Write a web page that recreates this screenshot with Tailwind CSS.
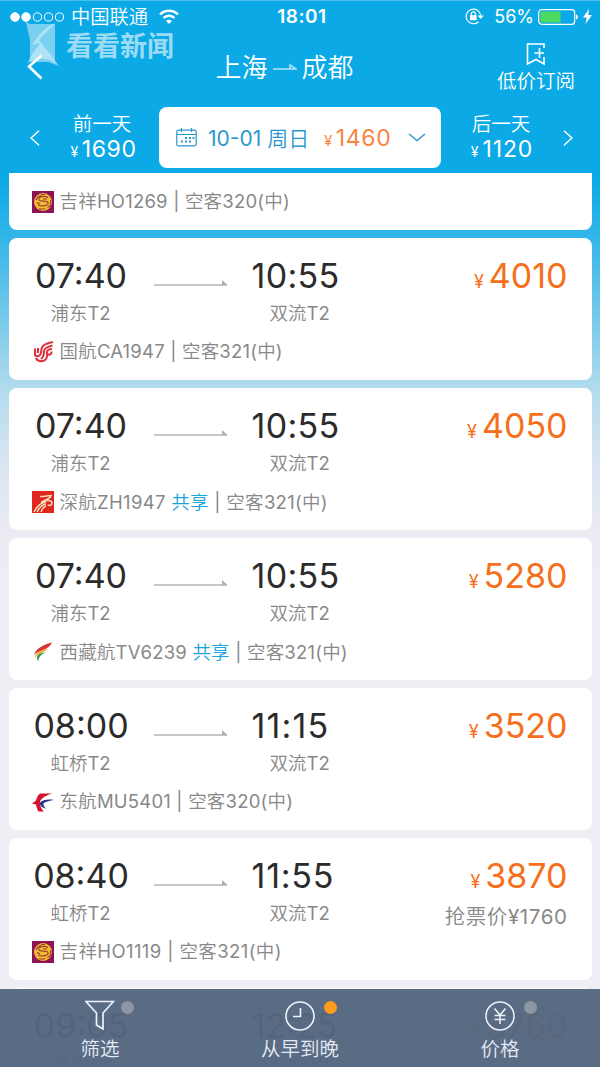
<!DOCTYPE html>
<html lang="zh-CN">
<head>
  <meta charset="UTF-8">
  <meta name="viewport" content="width=device-width, initial-scale=1.0">
  <title>上海 - 成都 机票</title>
  <script src="https://cdn.jsdelivr.net/npm/@tailwindcss/browser@4"></script>
  <style>
    body {
      font-family: Inter, 'Noto Sans CJK SC DemiLight', 'Noto Sans CJK SC', sans-serif;
      font-weight: 400;
    }
  </style>
</head>
<body class="w-[600px] h-[1067px] overflow-hidden relative bg-[linear-gradient(to_bottom,#0ba9e6_0px,#0ba9e6_180px,#35b6e9_240px,#6cc6e9_305px,#aedaed_384px,#d6e4f1_455px,#ecebf4_535px,#efeef5_600px)]">

  <!-- icons -->
  <svg class="hidden">
    <symbol id="arrow" viewBox="0 0 74 6"><path d="M0 5H73" fill="none" stroke="#b5b5b5" stroke-width="1.500"/><path d="M68 0V5H73.500z" fill="#b0b0b0"/></symbol>
    <symbol id="juneyao" viewBox="0 0 22 22">
      <rect width="22" height="22" fill="#8e1458"/>
      <circle cx="11" cy="11" r="9" fill="#f0bb2c"/>
      <path d="M16 6.500C11 4 6 6 7 9c1 2 8 0 9 2.500 1 3-5 4.500-10 2.500M4 9c1-3 3-4 5-4.500M18.500 9c1 3 0 6-3 7.500M7 17.500c2 1 4 1 6 0M11 8h4M5 11.500l3 1.500M9 3.500h4" fill="none" stroke="#a03c3c" stroke-width="1.200"/>
    </symbol>
    <symbol id="airchina" viewBox="0 0 20 22">
      <path d="M1.500 7.500V13c0 3 4.500 3 5.500 0 1-2 .5-4 1.500-6.500C10 3 14 2 19.500 1M4.500 7v5M7.500 18c2-1.500 3-4 3-7.500C10.500 7 14 5.500 19 4.500" fill="none" stroke="#dc3540" stroke-width="2.100"/>
      <path d="M2.500 17c2 4.500 10.500 4.500 11-2V11.500c0-2.500 2-3.500 5-3.500M14 13.500c3 .5 4-.5 4-3" fill="none" stroke="#dc3540" stroke-width="2.100"/>
    </symbol>
    <symbol id="shenzhen" viewBox="0 0 22 22">
      <rect width="22" height="22" fill="#df261f"/>
      <path d="M8 5.500c4 .5 7-1 11-1-1 4-6 4-10 7 4-2 10-3.500 11 0 0 3-3 4-4 2M2 21c3-6 6-9 12-10M5 21c2-4 4-7 9-8M9 21c1-3 2-5 5-6" fill="none" stroke="#f8dcb8" stroke-width="1.500"/>
    </symbol>
    <symbol id="tibet" viewBox="0 0 20 20">
      <path d="M19 .5C11 2.500 3 6 1 13 6 8 16 8 19 .5z" fill="#d8323b"/>
      <path d="M15 6.500C8 8 3 10 1.500 16 5 11.500 11 11 15 6.500z" fill="#f0b12c"/>
      <path d="M12.500 10.500C6 11 1.500 14 5.500 19.500 5 15.500 8 12.500 12.500 10.500z" fill="#2f9a55"/>
    </symbol>
    <symbol id="eastern" viewBox="0 0 22 19">
      <path d="M8 .5h12.500C15 2 10 4.500 8 8.500 7.500 12 9.500 16 12 18.500H6.500C5.500 17 4.500 14 4 11.500L0 10.500 4 7.500C5 4 6 2 8 .5z" fill="#d51130"/>
      <path d="M22 7C16 6 10.500 7 8 9.500c-.5 3 2.500 5.500 6 6-2-2-3.500-4-2-5.500C14 8.500 18 7.800 22 7z" fill="#253288"/>
    </symbol>
  </svg>

  <header class="h-[173px] text-white">
    <!-- status bar -->
    <div class="h-8 grid grid-cols-3 items-center border-t border-white/25">
      <div class="flex items-center pl-[10px]">
        <svg class="w-[54px] h-[10px]" viewBox="0 0 54 10" fill="none" stroke="#fff">
          <circle cx="5" cy="5" r="4.300" fill="#fff"/><circle cx="16" cy="5" r="4.300" fill="#fff"/><circle cx="27.500" cy="5" r="4.100"/><circle cx="38.500" cy="5" r="4.100"/><circle cx="49.500" cy="5" r="4.100"/>
        </svg>
        <span class="ml-[7px] text-[19.300px] leading-[30px]">中国联通</span>
        <svg class="ml-[11px] w-5 h-4" viewBox="0 0 20 16" fill="none" stroke="#fff" stroke-width="2.400">
          <path d="M1 5.500C6 .5 14 .5 19 5.500M4.500 9c3-3 8-3 11 0"/><path d="M10 15l-3-3.200c1.800-1.500 4.200-1.500 6 0z" fill="#fff" stroke="none"/>
        </svg>
      </div>
      <div class="text-center pl-1 text-[19px] leading-[30px] font-semibold tracking-[0.500px]">18:01</div>
      <div class="flex items-center justify-end pr-[8px]">
        <svg class="w-[19px] h-[17px]" viewBox="0 0 19 17" fill="none" stroke="#fff" stroke-width="1.200">
          <path d="M13.500 13.700A7.300 7.300 0 1 1 15.700 7.500"/><path d="M12.500 7.500h6.300l-3 3.500z" fill="#fff" stroke="none"/>
          <rect x="5" y="7.200" width="6.600" height="5" fill="#fff" stroke="none"/><path d="M6.300 7.500V5.800a2 2 0 0 1 4 0v1.700"/>
        </svg>
        <span class="ml-[10px] text-[18px] leading-[30px]">56%</span>
        <svg class="ml-[4px] w-[40px] h-4" viewBox="0 0 40 16">
          <rect x=".7" y=".7" width="36" height="14.600" rx="3" fill="none" stroke="#fff" stroke-width="1.200"/>
          <rect x="2.500" y="2.500" width="20" height="11" fill="#4cd964"/>
          <path d="M38 5.500c2.500.5 2.500 4.500 0 5z" fill="#fff"/>
        </svg>
        <svg class="ml-[5px] w-[9px] h-[15px]" viewBox="0 0 9 15" fill="#fff"><path d="M6 0L0 8.500h3.700L2.500 15 9 6H5.200z"/></svg>
      </div>
    </div>

    <!-- title -->
    <div class="h-[75px] grid grid-cols-[200px_1fr_200px]">
      <svg class="ml-[27px] mt-[22px] w-4 h-[26px]" viewBox="0 0 16 26" fill="none" stroke="#fff" stroke-width="2.600"><path d="M14.500 1.500L2 12.500l12.500 12"/></svg>
      <div class="mt-[17px] h-9 flex items-center justify-center pr-[31px] whitespace-nowrap text-[26px]">
        <span>上海</span>
        <svg class="mx-[5px] w-6 h-2" viewBox="0 0 24 8"><path d="M0 6H23L17 2V6" fill="none" stroke="#fff" stroke-opacity=".7" stroke-width="1.500"/></svg>
        <span>成都</span>
      </div>
      <div class="flex flex-col items-center pt-[11px] pl-[72px]">
        <svg class="w-5 h-[23px]" viewBox="0 0 20 23" fill="none" stroke="#fff" stroke-width="1.600"><path d="M18 5V1H1.500V21L10 16.500 18 21V14M13.500 5v10M8.500 10h9.500"/></svg>
        <span class="mt-px text-[19.500px] leading-7">低价订阅</span>
      </div>
    </div>

    <!-- day switcher -->
    <div class="flex h-[61px]">
      <div class="w-[159px] flex items-center">
        <svg class="ml-[30px] w-[10px] h-4" viewBox="0 0 10 16" fill="none" stroke="#fff" stroke-width="1.500"><path d="M9 .7L1 8l8 7.300"/></svg>
        <div class="ml-[28px] w-[68px] flex flex-col items-center whitespace-nowrap">
          <span class="text-[19.500px] leading-[26px]">前一天</span>
          <span class="pl-[3px] text-[23px] leading-[25px] tracking-[0.600px]"><span class="text-[14px] mr-[3px]">¥</span>1690</span>
        </div>
      </div>
      <div class="w-[282px] h-[61px] bg-white rounded-lg flex items-center whitespace-nowrap text-[#2a98cf]">
        <svg class="ml-[17px] w-[21px] h-[19px]" viewBox="0 0 21 19" fill="none" stroke="#2a98cf" stroke-width="1.200">
          <rect x=".8" y="2.200" width="19.400" height="15.600" rx="1.500"/><path d="M1 6.500h19M5.500 0v4M15.500 0v4"/><path d="M9 10h2M13 10h2M16.500 10h2M5 13.500h2M9 13.500h2M13 13.500h2" stroke-width="1.800"/>
        </svg>
        <span class="ml-[11px] w-[102px] pt-0.5 text-[21px]">10-01 周日</span>
        <span class="ml-[14px] w-[68px] pt-px text-[23px] tracking-[0.600px] text-[#f5853f]"><span class="text-[15px] mr-[3px]">¥</span>1460</span>
        <svg class="ml-[16px] w-[18px] h-[9px]" viewBox="0 0 18 9" fill="none" stroke="#2a98cf" stroke-width="1.400"><path d="M1 1l8 6.500L17 1"/></svg>
      </div>
      <div class="flex-1 flex items-center">
        <div class="ml-[26px] w-[68px] flex flex-col items-center whitespace-nowrap">
          <span class="text-[19.500px] leading-[26px]">后一天</span>
          <span class="pl-[2px] text-[23px] leading-[25px] tracking-[0.900px]"><span class="text-[14px] mr-[3px]">¥</span>1120</span>
        </div>
        <svg class="ml-[28px] w-[10px] h-4" viewBox="0 0 10 16" fill="none" stroke="#fff" stroke-width="1.500"><path d="M1 .7L9 8l-8 7.300"/></svg>
      </div>
    </div>
  </header>

  <!-- video watermark -->
  <div class="absolute left-[26px] top-[22px] flex items-start text-white/60">
    <svg class="w-[34px] h-[44px]" viewBox="0 0 34 44" fill="#fff">
      <path d="M0 0L4 2H29V39L33 44 22 40H4V18z" fill-opacity=".45"/>
      <path d="M29 1C20 5 12 13 6 23c3-1 6-2 8-1C8 28 4 35 1 42c6-5 12-7 17-5 6 1 10 2 14 6C27 35 24 31 19 26 15 20 12 19 14 17 19 10 24 8 29 1z" fill-opacity=".4"/>
    </svg>
    <span class="ml-[6px] mt-[3px] text-[27px] leading-10 font-['Noto_Sans_CJK_SC'] font-bold">看看新闻</span>
  </div>

  <!-- flights -->
  <main class="mx-[8.500px] h-[894px] overflow-hidden flex flex-col gap-2">
    <section class="shrink-0 h-[57px] bg-white rounded-b-lg pt-[17px]">
      <div class="flex items-center h-6 pl-[23px] text-[18.500px] tracking-[0.200px] text-[#888]">
        <svg class="w-[22px] h-[22px] mr-[6px]"><use href="#juneyao"/></svg>
        <span>吉祥HO1269 | 空客320(中)</span>
      </div>
    </section>

    <section class="shrink-0 h-[142px] bg-white rounded-lg pt-[19px]">
      <div class="flex h-9 items-center text-[34px] text-[#2b2b2b]">
        <span class="w-[145px] text-center">07:40</span>
        <svg class="w-[74px] h-[6px] mt-[16px]"><use href="#arrow"/></svg>
        <span class="ml-[24px] tracking-[0.300px]">10:55</span>
        <span class="ml-auto pr-[24px] text-[#f56f1c]"><span class="text-[18px] mr-[5px]">¥</span>4010</span>
      </div>
      <div class="mt-[9px] h-6 flex items-center text-[18.500px] text-[#888]">
        <span class="w-[144px] text-center">浦东T2</span>
        <span class="ml-[117px]">双流T2</span>
      </div>
      <div class="mt-[14px] flex items-center h-6 pl-[24px] text-[18.500px] tracking-[0.200px] text-[#888]">
        <svg class="w-[21px] h-[22px] mr-[6px]"><use href="#airchina"/></svg>
        <span>国航CA1947 | 空客321(中)</span>
      </div>
    </section>

    <section class="shrink-0 h-[142px] bg-white rounded-lg pt-[19px]">
      <div class="flex h-9 items-center text-[34px] text-[#2b2b2b]">
        <span class="w-[145px] text-center">07:40</span>
        <svg class="w-[74px] h-[6px] mt-[16px]"><use href="#arrow"/></svg>
        <span class="ml-[24px] tracking-[0.300px]">10:55</span>
        <span class="ml-auto pr-[24px] text-[#f56f1c]"><span class="text-[18px] mr-[5px]">¥</span>4050</span>
      </div>
      <div class="mt-[9px] h-6 flex items-center text-[18.500px] text-[#888]">
        <span class="w-[144px] text-center">浦东T2</span>
        <span class="ml-[117px]">双流T2</span>
      </div>
      <div class="mt-[14px] flex items-center h-6 pl-[23px] text-[18.500px] tracking-[0.300px] text-[#888]">
        <svg class="w-[22px] h-[22px] mr-[6px]"><use href="#shenzhen"/></svg>
        <span class="leading-5">深航ZH1947 <span class="text-[#1ba3de]">共享</span> | 空客321(中)</span>
      </div>
    </section>

    <section class="shrink-0 h-[142px] bg-white rounded-lg pt-[19px]">
      <div class="flex h-9 items-center text-[34px] text-[#2b2b2b]">
        <span class="w-[145px] text-center">07:40</span>
        <svg class="w-[74px] h-[6px] mt-[16px]"><use href="#arrow"/></svg>
        <span class="ml-[24px] tracking-[0.300px]">10:55</span>
        <span class="ml-auto pr-[24px] text-[#f56f1c]"><span class="text-[18px] mr-[5px]">¥</span>5280</span>
      </div>
      <div class="mt-[9px] h-6 flex items-center text-[18.500px] text-[#888]">
        <span class="w-[144px] text-center">浦东T2</span>
        <span class="ml-[117px]">双流T2</span>
      </div>
      <div class="mt-[14px] flex items-center h-6 pl-[23px] text-[18.500px] tracking-[0.200px] text-[#888]">
        <svg class="w-[22px] h-[20px] mr-[6px]"><use href="#tibet"/></svg>
        <span class="leading-5">西藏航TV6239 <span class="text-[#1ba3de]">共享</span> | 空客321(中)</span>
      </div>
    </section>

    <section class="shrink-0 h-[142px] bg-white rounded-lg pt-[19px]">
      <div class="flex h-9 items-center text-[34px] text-[#2b2b2b]">
        <span class="w-[145px] text-center">08:00</span>
        <svg class="w-[74px] h-[6px] mt-[16px]"><use href="#arrow"/></svg>
        <span class="ml-[24px] tracking-[1.200px]">11:15</span>
        <span class="ml-auto pr-[24px] text-[#f56f1c]"><span class="text-[18px] mr-[5px]">¥</span>3520</span>
      </div>
      <div class="mt-[9px] h-6 flex items-center text-[18.500px] text-[#888]">
        <span class="w-[144px] text-center">虹桥T2</span>
        <span class="ml-[117px]">双流T2</span>
      </div>
      <div class="mt-[14px] flex items-center h-6 pl-[23px] text-[18.500px] tracking-[0.200px] text-[#888]">
        <svg class="w-[22px] h-[19px] mr-[6px]"><use href="#eastern"/></svg>
        <span>东航MU5401 | 空客320(中)</span>
      </div>
    </section>

    <section class="shrink-0 h-[142px] bg-white rounded-lg pt-[19px]">
      <div class="flex h-9 items-center text-[34px] text-[#2b2b2b]">
        <span class="w-[145px] text-center">08:40</span>
        <svg class="w-[74px] h-[6px] mt-[16px]"><use href="#arrow"/></svg>
        <span class="ml-[24px] tracking-[0.800px]">11:55</span>
        <span class="ml-auto pr-[24px] text-[#f56f1c]"><span class="text-[18px] mr-[5px]">¥</span>3870</span>
      </div>
      <div class="mt-[9px] h-6 flex items-center text-[18.500px] text-[#888]">
        <span class="w-[144px] text-center">虹桥T2</span>
        <span class="ml-[117px]">双流T2</span>
        <span class="ml-auto pr-[24px] pt-[7px] text-[20.500px] tracking-[0.600px]">抢票价¥1760</span>
      </div>
      <div class="mt-[14px] flex items-center h-6 pl-[23px] text-[18.500px] tracking-[0.400px] text-[#888]">
        <svg class="w-[22px] h-[22px] mr-[6px]"><use href="#juneyao"/></svg>
        <span>吉祥HO1119 | 空客321(中)</span>
      </div>
    </section>

    <section class="shrink-0 h-[142px] bg-white rounded-lg pt-[19px]">
      <div class="flex h-9 items-center text-[34px] text-[#2b2b2b]">
        <span class="w-[145px] text-center">09:05</span>
        <svg class="w-[74px] h-[6px] mt-[16px]"><use href="#arrow"/></svg>
        <span class="ml-[24px]">12:25</span>
        <span class="ml-auto pr-[24px] text-[#f56f1c]"><span class="text-[18px] mr-[5px]">¥</span>3760</span>
      </div>
      <div class="mt-[9px] h-6 flex items-center text-[18.500px] text-[#888]">
        <span class="w-[144px] text-center">浦东T2</span>
        <span class="ml-[117px]">双流T2</span>
      </div>
    </section>
  </main>

  <!-- bottom bar -->
  <nav class="absolute left-0 bottom-0 w-full h-[78px] grid grid-cols-3 bg-[#556680]/97 text-[#e4eaf4] text-[19.500px]">
    <div class="relative flex flex-col items-center pt-[11px]">
      <svg class="w-[30px] h-[31px]" viewBox="0 0 30 31" fill="none" stroke="#eef2fa" stroke-width="1.700"><path d="M1 1.500H28.500L18 13V29L11.500 25V13z"/></svg>
      <span class="mt-[4px] leading-7">筛选</span>
      <i class="absolute left-[121px] top-[12px] size-[13px] rounded-full bg-[#8e96a6]"></i>
    </div>
    <div class="relative flex flex-col items-center pt-[11px]">
      <svg class="w-[30px] h-[31px]" viewBox="0 0 30 31" fill="none" stroke="#eef2fa" stroke-width="1.600"><circle cx="15" cy="16" r="14"/><path d="M15.500 8v8.500H8"/></svg>
      <span class="mt-[4px] leading-7">从早到晚</span>
      <i class="absolute left-[124px] top-[12px] size-[13px] rounded-full bg-[#ff9c1b]"></i>
    </div>
    <div class="relative flex flex-col items-center pt-[11px]">
      <svg class="w-[30px] h-[31px]" viewBox="0 0 30 31" fill="none" stroke="#eef2fa" stroke-width="1.500"><circle cx="15" cy="16" r="14"/><path d="M9.500 8.500L15 15l5.500-6.500M15 15v9M9.500 15.500h11M9.500 19.500h11"/></svg>
      <span class="mt-[4px] leading-7">价格</span>
      <i class="absolute left-[124px] top-[12px] size-[13px] rounded-full bg-[#8b98a4]"></i>
    </div>
  </nav>
</body>
</html>
